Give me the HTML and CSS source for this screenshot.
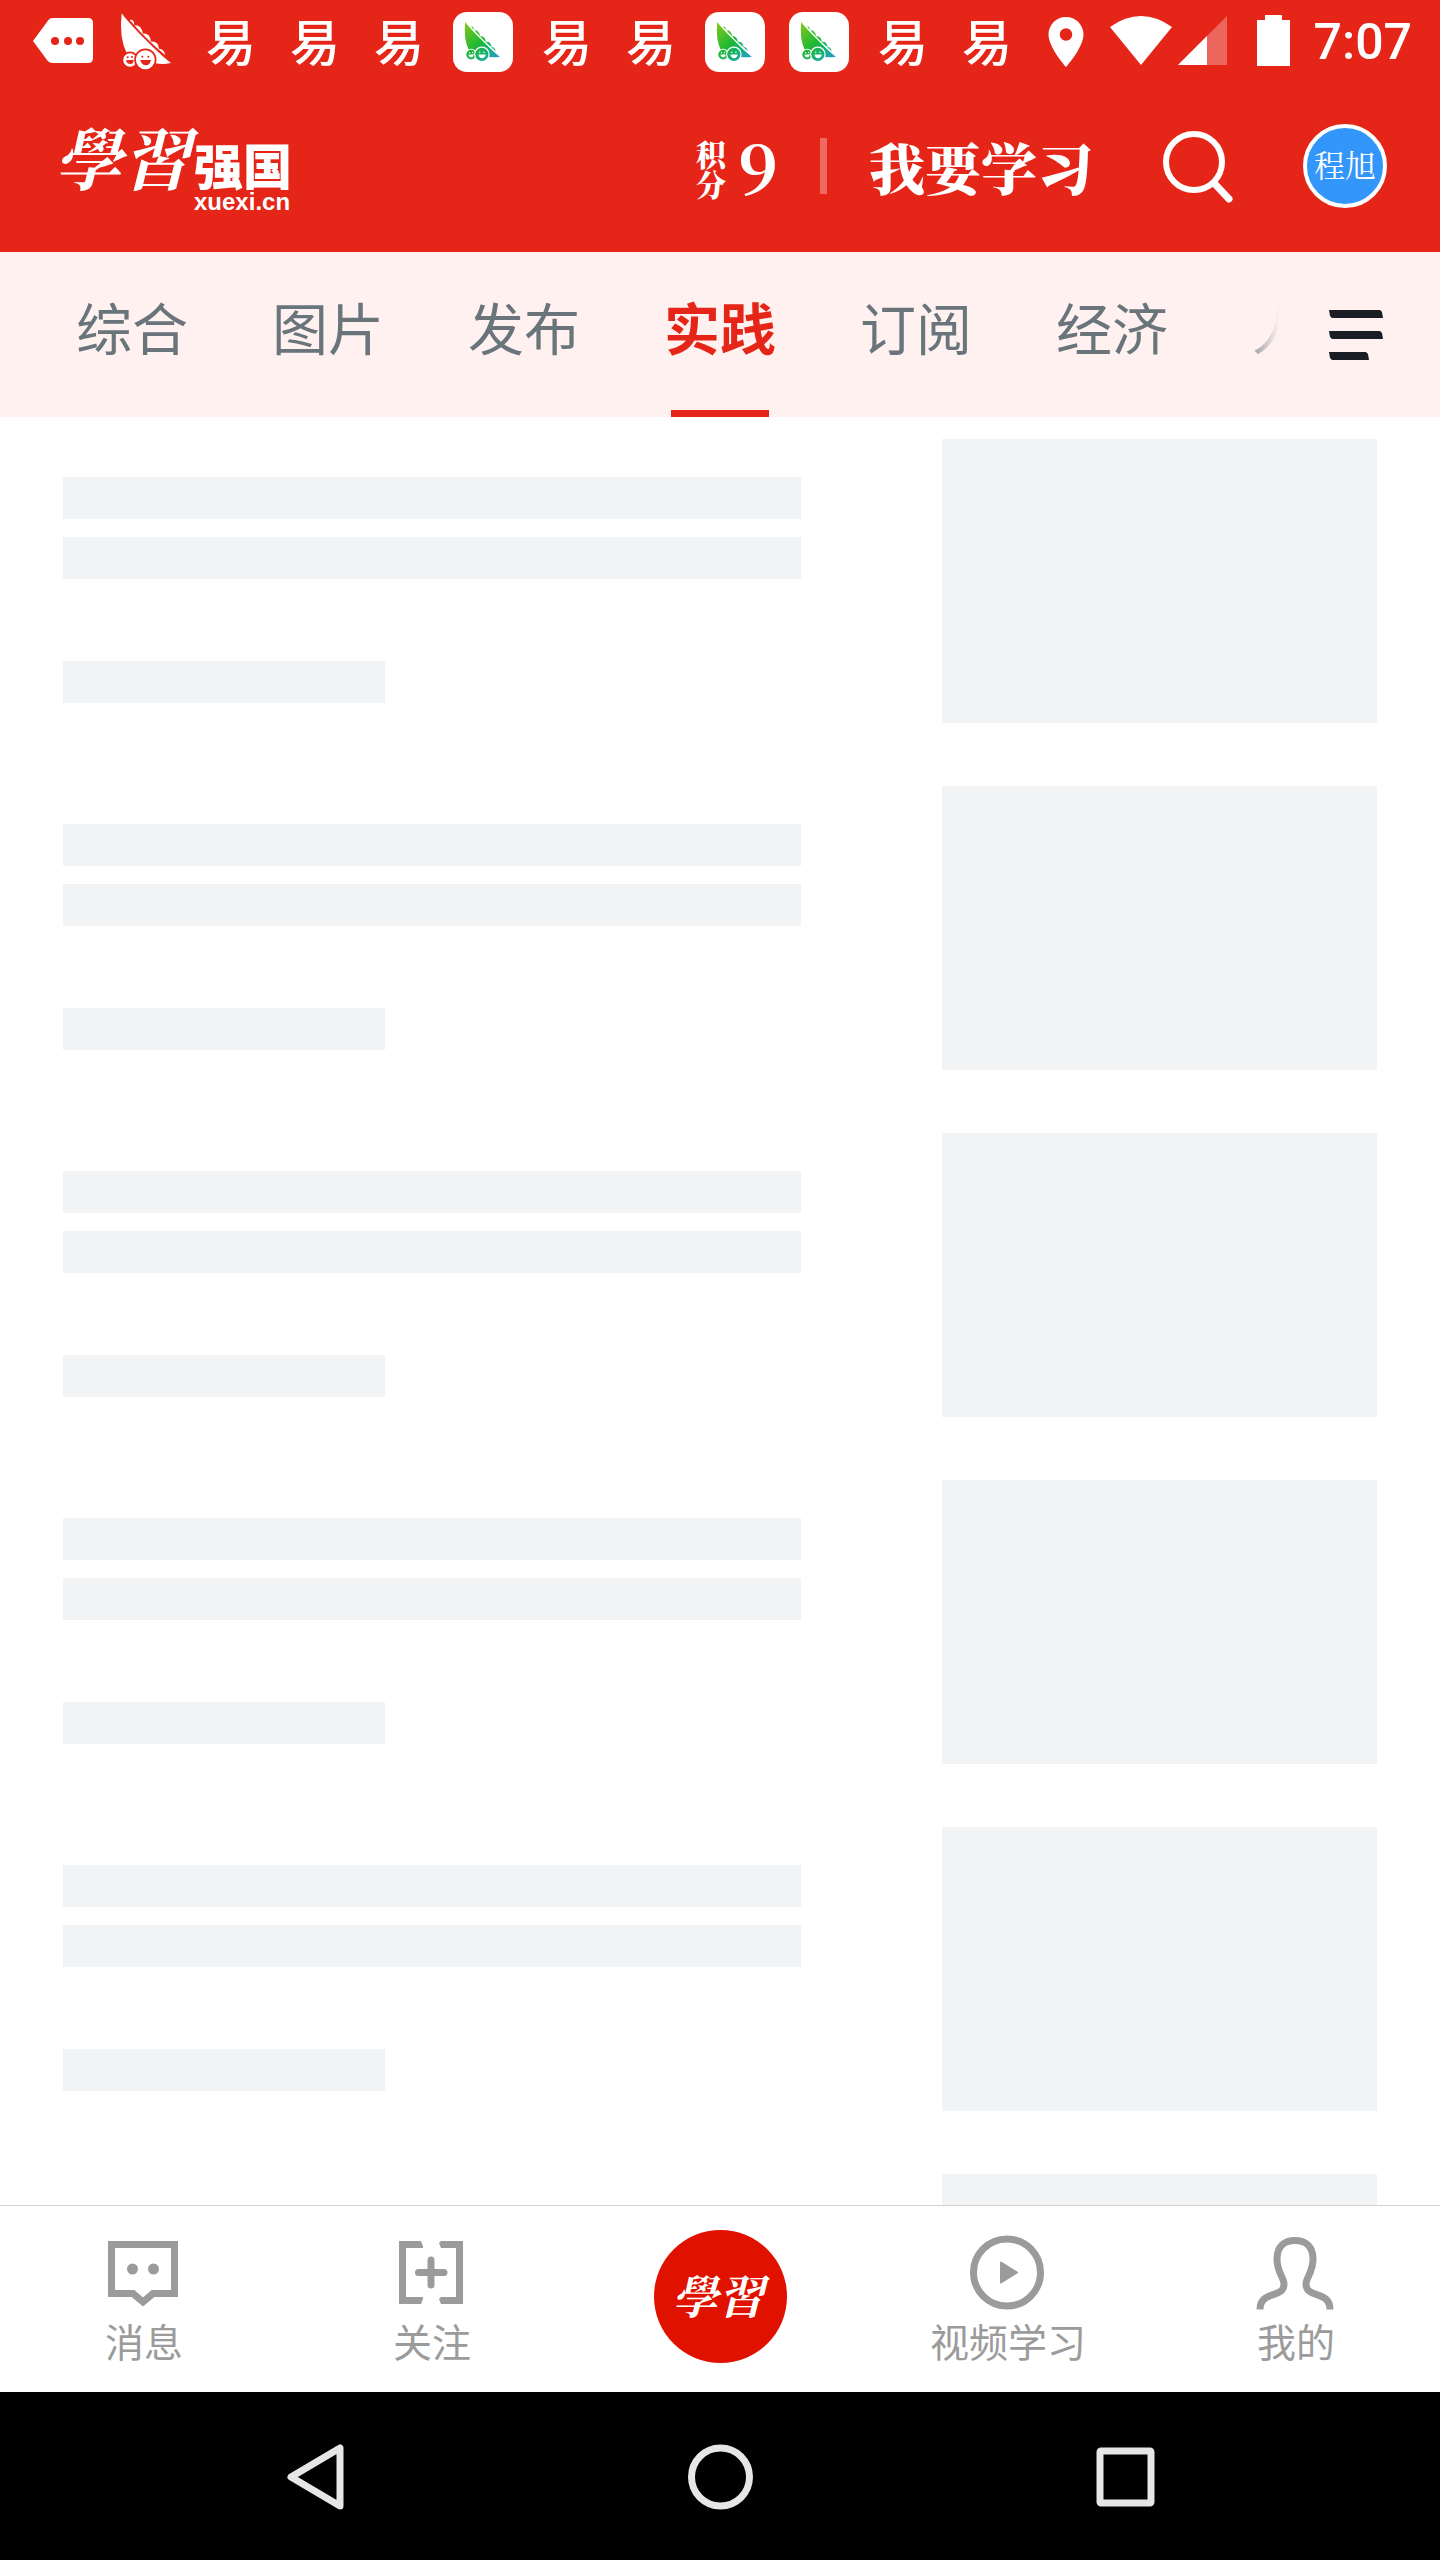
FILE: index.html
```html
<!DOCTYPE html>
<html lang="zh-CN">
<head>
<meta charset="utf-8">
<meta name="viewport" content="width=device-width, initial-scale=1">
<title>学习强国</title>
<link rel="stylesheet" href="styles.css">
</head>
<body>
<svg class="defs" aria-hidden="true">
  <defs>
    <linearGradient id="pod-green" gradientUnits="userSpaceOnUse" x1="360" y1="45" x2="510" y2="200">
      <stop offset="0" stop-color="#86c81a"/>
      <stop offset="0.5" stop-color="#1db835"/>
      <stop offset="0.75" stop-color="#18b07c"/>
      <stop offset="1" stop-color="#1f9ad6"/>
    </linearGradient>
    <symbol id="pod" viewBox="351 39 180 180">
      <path class="pod-fill" d="M365 43C376 58 396 80 413 98C443 128 482 168 513 192Q490 197 466 193L380 163Q357 117 365 43Z"/>
      <path class="pod-fill" d="M389 63Q402 60 403 79Q424 77 429 104Q450 102 453 128Q475 126 477 149Q492 150 496 169Q440 122 389 63Z"/>
      <circle class="pod-face" cx="390" cy="183" r="23"/>
      <circle class="pod-face" cx="436" cy="182" r="31"/>
      <g class="pod-detail">
        <circle cx="383" cy="175" r="3"/><circle cx="396" cy="174" r="3"/>
        <path d="M378 184L401 182Q401 195 391 195Q380 195 378 184Z"/>
        <circle cx="427" cy="173" r="3"/><circle cx="445" cy="173" r="3"/>
        <path d="M421 183H453Q450 199 437 199Q424 198 421 183Z"/>
      </g>
    </symbol>
  </defs>
</svg>
<div class="screen">
  <div class="status">
    <div class="notices">
      <span class="notice"><svg class="icon60" viewBox="0 0 60 60"><path fill="#fff" d="M0 29L14 10Q16 6 20 6H55Q60 6 60 11V46Q60 51 55 51H20Q16 51 14 48Z"/><g fill="#e52518"><circle cx="22" cy="29" r="4"/><circle cx="35" cy="29" r="4"/><circle cx="47" cy="29" r="4"/></g></svg></span>
      <span class="notice"><svg class="icon60 pod-white"><use href="#pod"/></svg></span>
      <span class="notice">易</span>
      <span class="notice">易</span>
      <span class="notice">易</span>
      <span class="notice"><span class="tile"><svg class="icon-pod"><use href="#pod"/></svg></span></span>
      <span class="notice">易</span>
      <span class="notice">易</span>
      <span class="notice"><span class="tile"><svg class="icon-pod"><use href="#pod"/></svg></span></span>
      <span class="notice"><span class="tile"><svg class="icon-pod"><use href="#pod"/></svg></span></span>
      <span class="notice">易</span>
      <span class="notice">易</span>
    </div>
    <div class="system">
      <svg class="icon60" viewBox="0 0 24 24"><path fill="#fff" d="M12 2C8.130 2 5 5.130 5 9c0 5.250 7 13 7 13s7-7.750 7-13c0-3.870-3.130-7-7-7zm0 9.500a2.500 2.500 0 1 1 0-5 2.500 2.500 0 0 1 0 5z"/></svg>
      <svg class="signals" viewBox="0 0 118 60"><path fill="#fff" d="M0 15Q31 -7 62 15L31 53Z"/><path fill="#fff" fill-opacity=".3" d="M117 4V53H68Z"/><path fill="#fff" d="M97 24V53H68Z"/></svg>
      <svg class="battery" viewBox="0 0 33 60"><path fill="#fff" d="M8 3H25V8H33V54H0V8H8Z"/></svg>
      <time class="clock">7:07</time>
    </div>
  </div>

  <header class="header">
    <a class="logo" href="#" aria-label="学习强国 xuexi.cn">
      <span class="logo-script">學習</span>
      <span class="logo-side"><span class="logo-name">强国</span><span class="logo-url">xuexi.cn</span></span>
    </a>
    <div class="header-tools">
      <a class="points" href="#"><span class="points-label">积<br>分</span><span class="points-value">9</span></a>
      <span class="divider"></span>
      <a class="study" href="#">我要学习</a>
      <button class="plain search" aria-label="搜索"><svg viewBox="0 0 72 84"><circle cx="32" cy="38" r="28" fill="none" stroke="#fff" stroke-width="6"/><path d="M52 59L67 75" stroke="#fff" stroke-width="7" stroke-linecap="round"/></svg></button>
      <button class="plain avatar">程旭</button>
    </div>
  </header>

  <nav class="channels">
    <div class="tabs">
      <button class="plain tab">综合</button>
      <button class="plain tab">图片</button>
      <button class="plain tab">发布</button>
      <button class="plain tab active" aria-current="page">实践</button>
      <button class="plain tab">订阅</button>
      <button class="plain tab">经济</button>
      <button class="plain tab">人</button>
    </div>
    <button class="plain more" aria-label="全部频道"><svg viewBox="0 0 54 50"><path fill="#1a1e24" d="M1 0H51L53 2L54 8H3L1 6L0 0ZM1 21H51L53 23L54 29H3L1 27L0 21ZM1 42H37L39 44L40 50H3L1 48L0 42Z"/></svg></button>
  </nav>

  <main class="feed" aria-busy="true">
    <div class="item"><div class="lines"><i></i><i></i><i></i></div><div class="thumb"></div></div>
    <div class="item"><div class="lines"><i></i><i></i><i></i></div><div class="thumb"></div></div>
    <div class="item"><div class="lines"><i></i><i></i><i></i></div><div class="thumb"></div></div>
    <div class="item"><div class="lines"><i></i><i></i><i></i></div><div class="thumb"></div></div>
    <div class="item"><div class="lines"><i></i><i></i><i></i></div><div class="thumb"></div></div>
    <div class="item"><div class="lines"><i></i><i></i><i></i></div><div class="thumb"></div></div>
  </main>

  <nav class="bottom">
    <button class="plain entry">
      <svg viewBox="0 0 80 80"><path fill="none" stroke="#9b9b9b" stroke-width="7" d="M7.500 12.500H70.500V61.500H49L39 70L29 61.500H7.500Z"/><circle cx="28.500" cy="37" r="5.500" fill="#9b9b9b"/><circle cx="49.500" cy="37" r="5.500" fill="#9b9b9b"/></svg>
      <span>消息</span>
    </button>
    <button class="plain entry">
      <svg viewBox="0 0 80 80"><path fill="#9b9b9b" d="M7 9H29L31 14V16H14V65H31V67L29 72H7ZM71 9H49L47 11L49 16H64V65H49L47 67L49 72H71Z"/><path fill="none" stroke="#9b9b9b" stroke-width="7" stroke-linecap="round" d="M39 28V53M26.500 40.500H52"/></svg>
      <span>关注</span>
    </button>
    <button class="plain entry"><span class="disc">學習</span></button>
    <button class="plain entry">
      <svg viewBox="0 0 80 80"><circle cx="39" cy="40.500" r="33.500" fill="none" stroke="#9b9b9b" stroke-width="7"/><path fill="#9b9b9b" stroke="#9b9b9b" stroke-width="2" stroke-linejoin="round" d="M33 30.500L49 40.500L33 50.500Z"/></svg>
      <span>视频学习</span>
    </button>
    <button class="plain entry">
      <svg viewBox="0 0 80 80"><path fill="none" stroke="#9b9b9b" stroke-width="7" stroke-linejoin="round" d="M4 77.500C4 58 28 67 28 52C28 46 21 40 21 27C21 14 29 8.500 39 8.500S57 14 57 27C57 40 50 46 50 52C50 67 74 58 74 77.500"/></svg>
      <span>我的</span>
    </button>
  </nav>

  <div class="system-keys">
    <button class="plain key" aria-label="返回"><svg viewBox="0 0 72 72"><path fill="none" stroke="#e6e6e6" stroke-width="7" stroke-linejoin="round" d="M59 8V66L10 37Z"/></svg></button>
    <button class="plain key" aria-label="主屏幕"><svg viewBox="0 0 72 72"><circle cx="36.500" cy="37" r="29" fill="none" stroke="#e6e6e6" stroke-width="7"/></svg></button>
    <button class="plain key" aria-label="最近任务"><svg viewBox="0 0 72 72"><rect x="13" y="11" width="51" height="52" rx="1" fill="none" stroke="#e6e6e6" stroke-width="7" stroke-linejoin="round"/></svg></button>
  </div>
</div>
</body>
</html>
```

FILE: styles.css
```css
* { box-sizing: border-box; }

body {
  margin: 0;
  background: #fff;
  font-family: "Noto Sans CJK SC", sans-serif;
}

a { color: inherit; text-decoration: none; }
svg { display: block; flex: none; }

.defs { position: absolute; width: 0; height: 0; }

.plain {
  border: 0;
  padding: 0;
  background: none;
  color: inherit;
  font: inherit;
  cursor: pointer;
}

.screen {
  display: flex;
  flex-direction: column;
  height: 100vh;
}

/* status bar */
.status {
  display: flex;
  align-items: center;
  justify-content: space-between;
  height: 86px;
  padding: 0 28px 2px 21px;
  background: #e52518;
  color: #fff;
}

.notices, .system { display: flex; align-items: center; }

.notice {
  display: flex;
  align-items: flex-start;
  justify-content: center;
  width: 84px;
  height: 60px;
  font-size: 50px;
  font-weight: 500;
  line-height: 54px;
}

.icon60 { width: 60px; height: 60px; }
.icon-pod { width: 42px; height: 42px; }

.tile {
  display: flex;
  align-items: center;
  justify-content: center;
  width: 60px;
  height: 60px;
  border-radius: 14px;
  background: #fff;
  --pod-paint: url(#pod-green);
  --pod-ground: #fff;
}

.pod-white { --pod-paint: #fff; --pod-ground: #e52518; }
.pod-fill { fill: var(--pod-paint); }
.pod-face { fill: var(--pod-paint); stroke: var(--pod-ground); stroke-width: 5px; }
.pod-detail { fill: var(--pod-ground); }

.signals { width: 118px; height: 60px; margin: 0 29px 0 14px; }
.battery { width: 33px; height: 60px; }

.clock {
  margin-left: 24px;
  font-family: Roboto, sans-serif;
  font-size: 50px;
  font-weight: 500;
  line-height: 60px;
}

/* app header */
.header {
  display: flex;
  align-items: center;
  justify-content: space-between;
  height: 166px;
  padding: 0 53px 6px 54px;
  background: #e52518;
  color: #fff;
}

.logo, .logo-side, .header-tools, .points { display: flex; }
.logo { align-items: center; gap: 4px; }

.logo-script {
  padding-bottom: 20px;
  font-family: "Noto Serif CJK TC", "Noto Sans CJK TC", serif;
  font-size: 68px;
  font-style: italic;
  font-weight: 700;
  line-height: 88px;
}

.logo-side { flex-direction: column; padding-top: 22px; }
.logo-name { font-size: 49px; font-weight: 900; line-height: 48px; }

.logo-url {
  padding-top: 2px;
  font-family: "Liberation Sans", sans-serif;
  font-size: 24px;
  font-weight: 700;
  line-height: 24px;
}

.header-tools {
  align-items: center;
  font-family: "Noto Serif CJK SC", "Noto Sans CJK SC", serif;
  font-weight: 900;
}

.points { align-items: center; gap: 12px; }
.points-label { padding-top: 4px; font-size: 30px; line-height: 30px; }

.points-value {
  font-size: 67px;
  font-weight: 700;
  line-height: 72px;
}

.divider {
  width: 7px;
  height: 56px;
  margin: 0 42px 0 42px;
  background: #ef6a61;
}

.study { font-size: 56px; line-height: 60px; }
.search { margin: 0 69px 0 69px; }
.search svg { width: 72px; height: 84px; }

.avatar {
  width: 84px;
  height: 84px;
  padding-bottom: 4px;
  border: 4px solid #fff;
  border-radius: 50%;
  background: #3396fb;
  color: #fff;
  font-size: 31px;
  font-weight: 400;
  line-height: 72px;
}

/* channel tabs */
.channels {
  display: flex;
  align-items: center;
  justify-content: space-between;
  height: 165px;
  padding-right: 57px;
  background: #fff1f0;
}

.tabs {
  display: flex;
  flex: 1;
  gap: 84px;
  height: 100%;
  min-width: 0;
  margin-right: 50px;
  padding-left: 76px;
  overflow: hidden;
  -webkit-mask-image: linear-gradient(to left, transparent, #000 40px);
  mask-image: linear-gradient(to left, transparent, #000 40px);
}

.tab {
  display: flex;
  flex: none;
  flex-direction: column;
  align-items: center;
  justify-content: space-between;
  padding-top: 34px;
  color: #69747b;
  font-size: 56px;
  line-height: 80px;
}

.tab.active { color: #e52518; font-weight: 700; }

.tab.active::after {
  content: "";
  width: 98px;
  height: 7px;
  background: #e52518;
}

.more svg { width: 54px; height: 50px; }

/* loading placeholders */
.feed {
  display: flex;
  flex: 1;
  flex-direction: column;
  gap: 63px;
  min-height: 0;
  padding: 22px 63px 0;
  overflow: hidden;
}

.item {
  display: flex;
  flex: none;
  justify-content: space-between;
}

.lines {
  display: flex;
  flex-direction: column;
  gap: 18px;
  width: 738px;
  padding-top: 38px;
}

.lines i { height: 42px; background: #f1f3f5; }
.lines i:last-child { width: 322px; margin-top: 64px; }
.thumb { width: 435px; height: 284px; background: #f1f3f5; }

/* app navigation */
.bottom {
  display: grid;
  grid-template-columns: repeat(5, 1fr);
  height: 187px;
  border-top: 1px solid #d0d0d0;
  background: #fff;
  color: #9b9b9b;
}

.entry {
  display: flex;
  flex-direction: column;
  align-items: center;
  padding-top: 24px;
  font-size: 39px;
  line-height: 56px;
}

.entry svg { width: 80px; height: 80px; margin-top: 2px; }

.disc {
  display: flex;
  align-items: center;
  justify-content: center;
  width: 133px;
  height: 133px;
  padding: 0 4px 6px 0;
  border-radius: 50%;
  background: #e11100;
  color: #fff;
  font-family: "Noto Serif CJK TC", "Noto Sans CJK TC", serif;
  font-size: 46px;
  font-style: italic;
  font-weight: 700;
}

/* system keys */
.system-keys {
  display: grid;
  grid-template-columns: repeat(3, 1fr);
  height: 168px;
  padding: 0 8%;
  background: #000;
}

.key { display: flex; align-items: center; justify-content: center; }
.key svg { width: 72px; height: 72px; }
```
